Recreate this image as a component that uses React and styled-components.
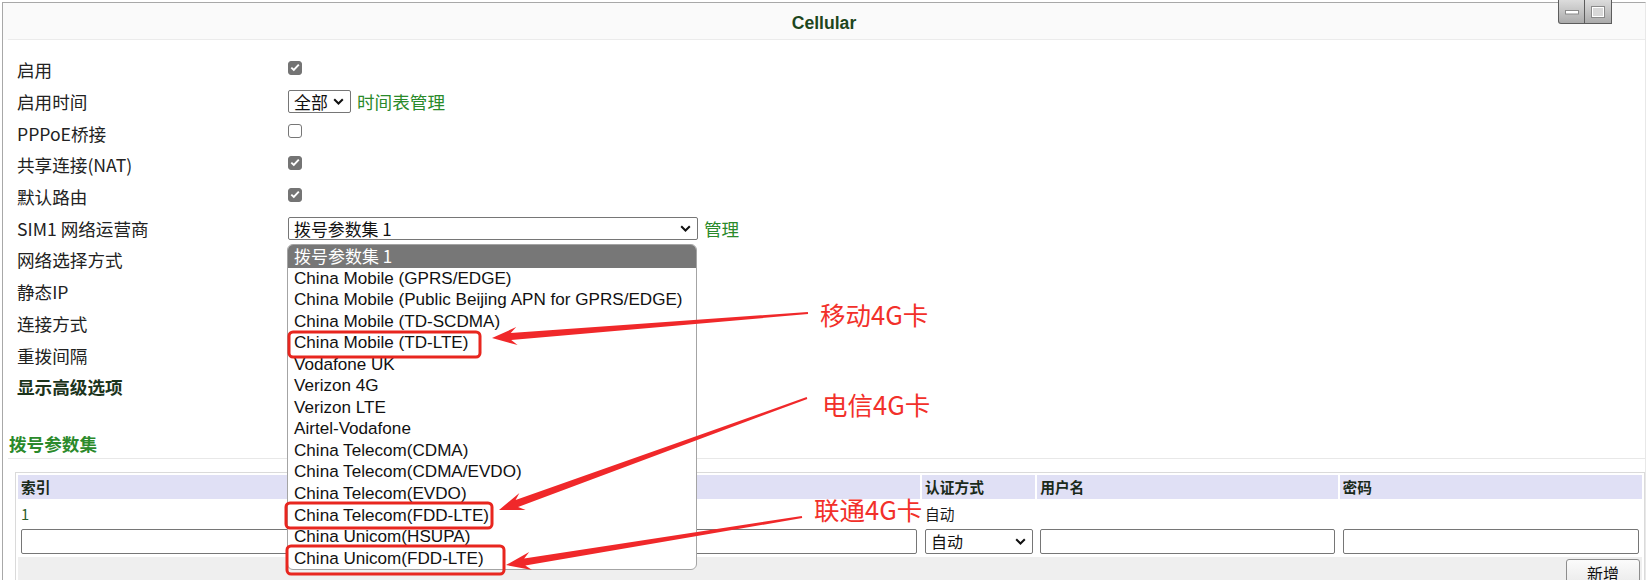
import React from 'react';
import styled, { createGlobalStyle } from 'styled-components';

const GlobalStyle = createGlobalStyle`
  body {
    margin: 0;
    background: #fff;
    font-family: "Noto Sans CJK SC", "Noto Sans", sans-serif;
  }
`;

const Page = styled.div`
  position: relative;
  width: 1648px;
  height: 580px;
  overflow: hidden;
  padding: 2px 0 0 2px;
  box-sizing: border-box;
`;

const Panel = styled.div`
  width: 1644px;
  min-height: 600px;
  box-sizing: border-box;
  border-top: 1px solid #a8a8a8;
  border-left: 1px solid #a8a8a8;
  border-right: 1px solid #e8e8e8;
`;

const Header = styled.div`
  position: relative;
  height: 37px;
  background: #fafafa;
  text-align: center;

  &::after {
    content: '';
    position: absolute;
    left: 5px;
    right: 0;
    bottom: 0;
    height: 1px;
    background: #ebebeb;
  }
`;

const Title = styled.h1`
  margin: 0;
  padding-top: 3px;
  font-family: "Liberation Sans", Arial, sans-serif;
  font-size: 17.6px;
  line-height: 34px;
  font-weight: bold;
  color: #1d461d;
`;

const WinButtons = styled.div`
  position: absolute;
  top: -3px;
  right: 33px;
  display: flex;
`;

const WinButton = styled.div`
  width: 27px;
  height: 24px;
  box-sizing: border-box;
  display: flex;
  align-items: center;
  justify-content: center;
  background: linear-gradient(#dcdcdc, #ababab);
  border: 1px solid #5c5c5c;
  border-top: none;
  border-bottom-left-radius: ${p => (p.$first ? '3px' : '0')};
  & + & {
    border-left: none;
  }
`;

const Form = styled.div`
  padding: 14px 0 0 14px;
`;

const Row = styled.div`
  display: flex;
  align-items: center;
  height: 31.7px;
`;

const Label = styled.div`
  width: 271px;
  font-size: 17.6px;
  color: ${p => (p.$bold ? '#1c341c' : '#222')};
  font-weight: ${p => (p.$bold ? 'bold' : 'normal')};
`;

const Control = styled.div`
  display: flex;
  align-items: center;
  gap: 6px;
`;

const Box = styled.span`
  display: inline-flex;
  align-items: center;
  justify-content: center;
  width: 14px;
  height: 14px;
  margin-top: -4px;
  box-sizing: border-box;
  border-radius: 3px;
  background: ${p => (p.$checked ? '#747474' : '#fff')};
  border: 1px solid ${p => (p.$checked ? '#747474' : '#767676')};
`;

const FakeSelect = styled.div`
  display: flex;
  align-items: center;
  justify-content: space-between;
  width: ${p => p.$w}px;
  height: ${p => p.$h || 23}px;
  box-sizing: border-box;
  padding: 0 6px 0 5px;
  border: 1px solid #767676;
  border-radius: 2px;
  background: #fff;
  font-size: ${p => p.$fs || 16.9}px;
  color: #111;
`;

const Link = styled.span`
  font-size: 17.6px;
  color: #2a8a2a;
`;

const SectionTitle = styled.h2`
  margin: 0 0 0 5px;
  padding: 26px 0 0 1px;
  line-height: 29px;
  font-size: 17.6px;
  font-weight: bold;
  color: #2b8a2b;
  border-bottom: 1px solid #e8e8e8;
`;

const TableWrap = styled.div`
  margin: 13px 0 0 12px;
`;

const Table = styled.table`
  table-layout: fixed;
  width: 1630px;
  border: 1px solid #dadada;
  border-spacing: 2px;
  font-size: 14.7px;
  color: #1a1a1a;
`;

const Th = styled.th`
  height: 24px;
  padding: 0 3px;
  text-align: left;
  font-weight: bold;
  background: #e0e0f5;
  color: #1a2a1a;
`;

const Td = styled.td`
  height: ${p => p.$h || 25}px;
  padding: 0 3px;
  color: ${p => (p.$green ? '#2b5e2b' : '#1a1a1a')};
`;

const FootCell = styled.td`
  height: 40px;
  padding: 2px 2px 0 0;
  vertical-align: top;
  text-align: right;
  background: #efefef;
`;

const Input = styled.input`
  display: block;
  width: 100%;
  height: 25px;
  box-sizing: border-box;
  border: 1px solid #767676;
  border-radius: 2px;
  background: #fff;
`;

const AddButton = styled.button`
  width: 74px;
  height: 28px;
  border: 1px solid #8d8d8d;
  border-radius: 3px;
  background: linear-gradient(#fbfbfb, #e9e9e9);
  font-family: "Noto Sans CJK SC", sans-serif;
  font-size: 16px;
  color: #111;
`;

const DropList = styled.div`
  position: absolute;
  left: 287px;
  top: 244px;
  width: 410px;
  height: 326px;
  box-sizing: border-box;
  border: 1px solid #a4a4a4;
  border-radius: 6px;
  background: #fff;
  overflow: hidden;
`;

const Option = styled.div`
  height: ${p => (p.$selected ? 22.5 : 21.55)}px;
  line-height: ${p => (p.$selected ? 22.5 : 21.55)}px;
  padding-left: 6px;
  white-space: nowrap;
  font-family: ${p => (p.$selected ? '"Noto Sans CJK SC", sans-serif' : '"Liberation Sans", Arial, sans-serif')};
  font-size: ${p => (p.$selected ? 17 : 17.1)}px;
  background: ${p => (p.$selected ? '#777' : 'transparent')};
  color: ${p => (p.$selected ? '#fff' : '#111')};
`;

const Overlay = styled.svg`
  position: absolute;
  left: 0;
  top: 0;
  pointer-events: none;
`;

const Note = styled.span`
  position: absolute;
  left: ${p => p.$x}px;
  top: ${p => p.$y}px;
  font-size: 25.5px;
  line-height: 34px;
  color: #f2302a;
  white-space: nowrap;
`;

const Chevron = () => (
  <svg width="11" height="7" viewBox="0 0 11 7">
    <path d="M1.2 1.2 L5.5 5.5 L9.8 1.2" fill="none" stroke="#111" strokeWidth="2" />
  </svg>
);

const Check = ({ checked }) => (
  <Box $checked={checked}>
    {checked && (
      <svg width="10" height="9" viewBox="0 0 10 9">
        <path d="M1.3 4.6 L3.8 7 L8.8 1.6" fill="none" stroke="#fff" strokeWidth="1.9" />
      </svg>
    )}
  </Box>
);

function arrowPoints([x1, y1], [x2, y2]) {
  const dx = x2 - x1;
  const dy = y2 - y1;
  const len = Math.hypot(dx, dy);
  const ux = dx / len;
  const uy = dy / len;
  const p = (t, w) => [x1 + ux * t - uy * w, y1 + uy * t + ux * w];
  const pts = [p(0, 1), p(len - 19, 3.6), p(len - 25, 9), p(len, 0), p(len - 25, -9), p(len - 19, -3.6), p(0, -1)];
  return pts.map(q => q.map(v => v.toFixed(1)).join(',')).join(' ');
}

const carriers = [
  'China Mobile (GPRS/EDGE)',
  'China Mobile (Public Beijing APN for GPRS/EDGE)',
  'China Mobile (TD-SCDMA)',
  'China Mobile (TD-LTE)',
  'Vodafone UK',
  'Verizon 4G',
  'Verizon LTE',
  'Airtel-Vodafone',
  'China Telecom(CDMA)',
  'China Telecom(CDMA/EVDO)',
  'China Telecom(EVDO)',
  'China Telecom(FDD-LTE)',
  'China Unicom(HSUPA)',
  'China Unicom(FDD-LTE)',
];

const arrows = [
  [[808, 313], [492, 338]],
  [[807, 398], [499, 510]],
  [[802, 517], [506, 565]],
];

const boxes = [
  { x: 289, y: 332, w: 191, h: 25 },
  { x: 286, y: 503, w: 206, h: 25 },
  { x: 287, y: 546, w: 217, h: 28 },
];

export default function App() {
  return (
    <Page>
      <GlobalStyle />
      <Panel>
        <Header>
          <Title>Cellular</Title>
          <WinButtons>
            <WinButton $first>
              <svg width="14" height="6" viewBox="0 0 14 6">
                <rect x="0.5" y="1.5" width="13" height="3.5" fill="#fff" stroke="#8a8a8a" />
              </svg>
            </WinButton>
            <WinButton>
              <svg width="14" height="12" viewBox="0 0 14 12">
                <rect x="1" y="1" width="12" height="10" fill="#d8d8d8" stroke="#fff" strokeWidth="2" />
                <rect x="0.5" y="0.5" width="13" height="11" fill="none" stroke="#8a8a8a" />
              </svg>
            </WinButton>
          </WinButtons>
        </Header>

        <Form>
          <Row><Label>启用</Label><Control><Check checked /></Control></Row>
          <Row>
            <Label>启用时间</Label>
            <Control>
              <FakeSelect $w={63}>全部<Chevron /></FakeSelect>
              <Link>时间表管理</Link>
            </Control>
          </Row>
          <Row><Label>PPPoE桥接</Label><Control><Check /></Control></Row>
          <Row><Label>共享连接(NAT)</Label><Control><Check checked /></Control></Row>
          <Row><Label>默认路由</Label><Control><Check checked /></Control></Row>
          <Row>
            <Label>SIM1 网络运营商</Label>
            <Control>
              <FakeSelect $w={410}>拨号参数集 1<Chevron /></FakeSelect>
              <Link>管理</Link>
            </Control>
          </Row>
          <Row><Label>网络选择方式</Label></Row>
          <Row><Label>静态IP</Label></Row>
          <Row><Label>连接方式</Label></Row>
          <Row><Label>重拨间隔</Label></Row>
          <Row><Label $bold>显示高级选项</Label></Row>
        </Form>

        <SectionTitle>拨号参数集</SectionTitle>
        <TableWrap>
          <Table>
            <colgroup>
              <col style={{ width: 448 }} />
              <col style={{ width: 451 }} />
              <col style={{ width: 113 }} />
              <col style={{ width: 300 }} />
              <col style={{ width: 302 }} />
            </colgroup>
            <thead>
              <tr>
                <Th>索引</Th>
                <Th>APN</Th>
                <Th>认证方式</Th>
                <Th>用户名</Th>
                <Th>密码</Th>
              </tr>
            </thead>
            <tbody>
              <tr>
                <Td $green>1</Td>
                <Td />
                <Td>自动</Td>
                <Td />
                <Td />
              </tr>
              <tr>
                <Td $h={27}><Input /></Td>
                <Td $h={27}><Input /></Td>
                <Td $h={27}><FakeSelect $w={108} $h={25} $fs={16}>自动<Chevron /></FakeSelect></Td>
                <Td $h={27}><Input /></Td>
                <Td $h={27}><Input /></Td>
              </tr>
              <tr>
                <FootCell colSpan={5}><AddButton>新增</AddButton></FootCell>
              </tr>
            </tbody>
          </Table>
        </TableWrap>
      </Panel>

      <DropList>
        <Option $selected>拨号参数集 1</Option>
        {carriers.map(c => <Option key={c}>{c}</Option>)}
      </DropList>

      <Overlay width="1648" height="580" viewBox="0 0 1648 580">
        {boxes.map((b, i) => (
          <rect key={i} x={b.x} y={b.y} width={b.w} height={b.h} rx="4" fill="none" stroke="#e8261f" strokeWidth="3" />
        ))}
        {arrows.map((a, i) => (
          <polygon key={i} points={arrowPoints(a[0], a[1])} fill="#f0282a" />
        ))}
      </Overlay>
      <Note $x={820} $y={297}>移动4G卡</Note>
      <Note $x={822} $y={387}>电信4G卡</Note>
      <Note $x={814} $y={492}>联通4G卡</Note>
    </Page>
  );
}
